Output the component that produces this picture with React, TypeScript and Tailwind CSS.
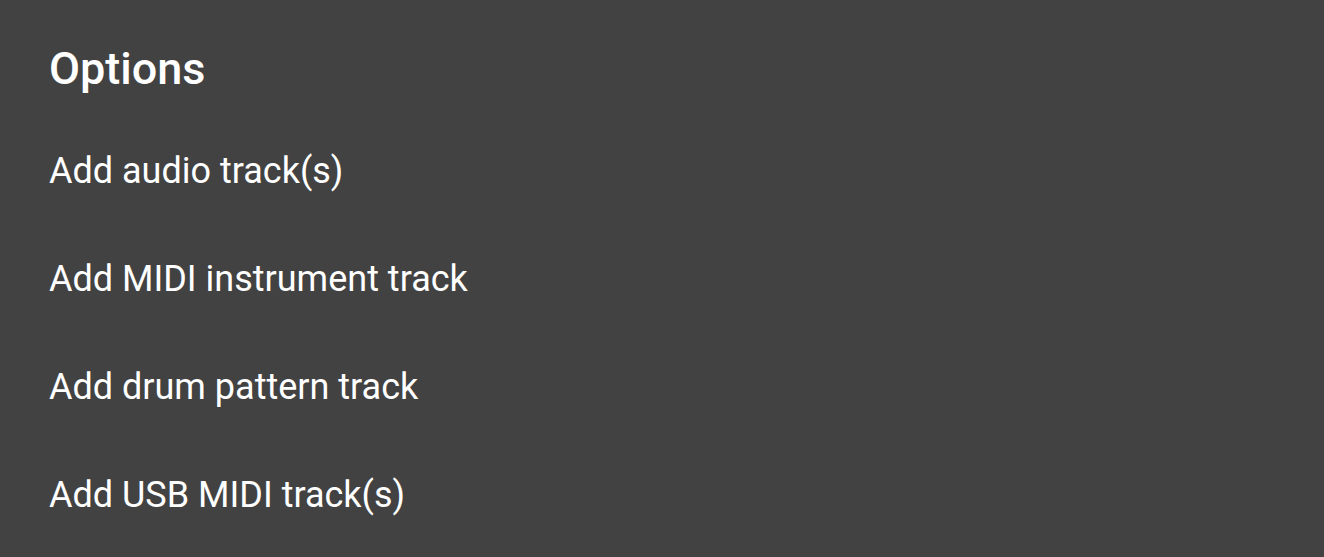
export default function App() {
  const items = [
    'Add audio track(s)',
    'Add MIDI instrument track',
    'Add drum pattern track',
    'Add USB MIDI track(s)',
  ]
  return (
    <div
      className="w-[1324px] h-[557px] bg-[#424242] text-white px-[49px] pt-[42px] overflow-hidden"
      style={{ fontFamily: 'Roboto, "Noto Sans", sans-serif' }}
    >
      {/* Title */}
      <h2 className="text-[45px] leading-[54px] font-medium">Options</h2>

      {/* Option list */}
      <ul className="mt-[21px]">
        {items.map((item, i) => (
          <li key={i} className="h-[108px] flex items-center text-[36px] leading-none">
            {item}
          </li>
        ))}
      </ul>
    </div>
  )
}
